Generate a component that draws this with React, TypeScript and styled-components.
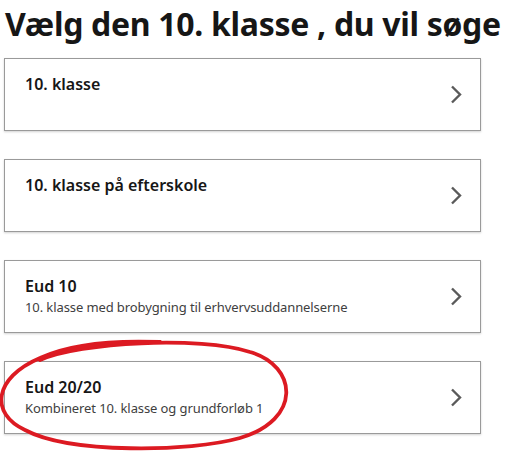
import React from "react";
import styled, { createGlobalStyle } from "styled-components";

const GlobalStyle = createGlobalStyle`
  body {
    margin: 0;
    background: #ffffff;
    font-family: "Noto Sans", "Open Sans", sans-serif;
    color: #161616;
  }
`;

const Page = styled.div`
  position: relative;
  box-sizing: border-box;
  width: 532px;
  min-height: 460px;
  padding: 4px 51px 0 4px;
`;

const Title = styled.h1`
  margin: 0 0 14px 1px;
  font-size: 32px;
  line-height: 40px;
  font-weight: 700;
  letter-spacing: -0.3px;
  white-space: nowrap;
  color: #161616;
`;

const List = styled.div`
  display: flex;
  flex-direction: column;
  gap: 28px;
`;

const Card = styled.div`
  box-sizing: border-box;
  height: 73px;
  display: flex;
  align-items: center;
  justify-content: space-between;
  padding: 14px 18px 0 20px;
  border: 1px solid #9a9a9a;
  background: #ffffff;
  box-shadow: 0 1px 2px rgba(0, 0, 0, 0.18);
`;

const CardText = styled.div`
  align-self: flex-start;
  display: flex;
  flex-direction: column;
`;

const CardTitle = styled.div`
  font-size: 16px;
  line-height: 22px;
  font-weight: 600;
  color: #161616;
`;

const CardSub = styled.div`
  font-size: 13px;
  line-height: 20px;
  letter-spacing: -0.1px;
  color: #404040;
`;

const Chevron = styled.svg`
  width: 12px;
  height: 19px;
  margin-top: -14px;
  flex: none;
`;

const Annotation = styled.svg`
  position: absolute;
  left: 0;
  top: 330px;
  width: 300px;
  height: 130px;
  overflow: visible;
  pointer-events: none;
`;

const items = [
  { title: "10. klasse" },
  { title: "10. klasse på efterskole" },
  { title: "Eud 10", sub: "10. klasse med brobygning til erhvervsuddannelserne" },
  { title: "Eud 20/20", sub: "Kombineret 10. klasse og grundforløb 1" },
];

export default function App() {
  return (
    <>
      <GlobalStyle />
      <Page>
        <Title>Vælg den 10. klasse , du vil søge</Title>
        <List>
          {items.map((item) => (
            <Card key={item.title}>
              <CardText>
                <CardTitle>{item.title}</CardTitle>
                {item.sub && <CardSub>{item.sub}</CardSub>}
              </CardText>
              <Chevron viewBox="0 0 12 19">
                <polyline
                  points="2,1.5 10,9.5 2,17.5"
                  fill="none"
                  stroke="#5a5a5a"
                  strokeWidth="2.4"
                />
              </Chevron>
            </Card>
          ))}
        </List>
        <Annotation viewBox="0 0 300 130">
          <path
            d="M40 30 C 80 12, 200 6, 250 22 C 298 36, 302 90, 240 108 C 190 122, 70 124, 25 100 C -10 84, -7 48, 40 28 C 70 14, 110 10, 160 12"
            fill="none"
            stroke="#dc1a22"
            strokeWidth="3.8"
            strokeLinecap="round"
          />
        </Annotation>
      </Page>
    </>
  );
}
